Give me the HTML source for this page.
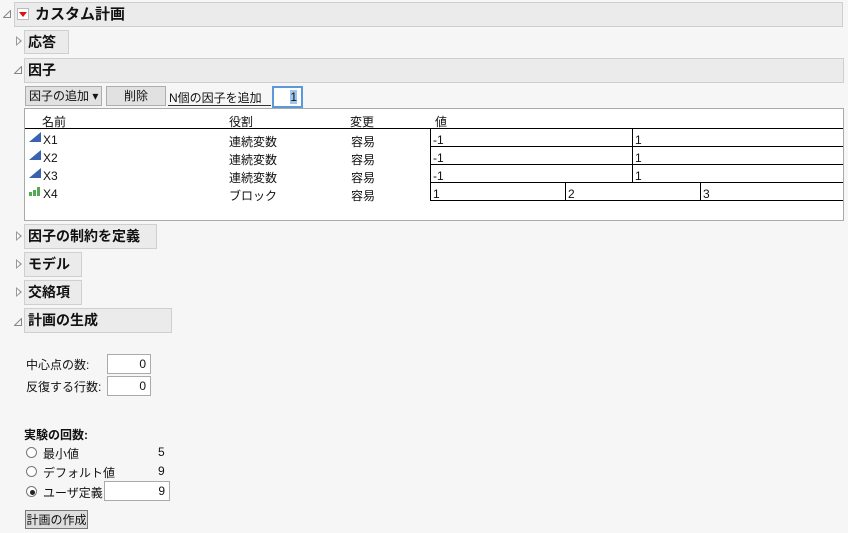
<!DOCTYPE html>
<html><head><meta charset="utf-8"><style>
body{margin:0;width:848px;height:533px;background:#f6f6f6;position:relative;overflow:hidden;font-family:"Liberation Sans","Noto Sans CJK JP",sans-serif;font-size:12px;color:#111}
.a{position:absolute;white-space:nowrap}
.hd{position:absolute;background:#ebebeb;border:1px solid #cfcfcf;box-sizing:border-box;font-weight:bold;font-size:14px;padding-left:3px;line-height:22px}
.tri{position:absolute;width:0;height:0;border-top:5px solid transparent;border-bottom:5px solid transparent;border-left:6px solid #999}
.tri:after{content:"";position:absolute;left:-5px;top:-3px;border-top:3px solid transparent;border-bottom:3px solid transparent;border-left:3.5px solid #fff}
.open{position:absolute;width:8px;height:8px}
.box{position:absolute;background:#fff;border:1px solid #aaa;box-sizing:border-box;text-align:right;padding-right:4px;line-height:18px}
.btn{position:absolute;background:#e1e1e1;border:1px solid #adadad;box-sizing:border-box;text-align:center;line-height:18px}
.hl{position:absolute;height:1px;background:#000}
.vl{position:absolute;width:1px;background:#000}
.rad{position:absolute;width:11px;height:11px;border:1px solid #777;border-radius:50%;background:#fff;box-sizing:border-box}
</style></head><body>
<svg class="open" style="left:3px;top:10px" viewBox="0 0 8 8"><path d="M7.5 0.5V7.5H0.5Z" fill="none" stroke="#888"/></svg>
<div class="hd" style="left:14px;top:2px;width:829px;height:25px;font-size:15px;padding-left:20px;line-height:24px">カスタム計画</div>
<div class="a" style="left:17px;top:8px;width:12px;height:12px;background:#fff;border:1px solid #bbb;box-sizing:border-box"></div>
<div class="a" style="left:19px;top:12px;border-left:4px solid transparent;border-right:4px solid transparent;border-top:5px solid #d11"></div>

<div class="tri" style="left:16px;top:36px"></div>
<div class="hd" style="left:24px;top:30px;width:45px;height:24px">応答</div>
<svg class="open" style="left:14px;top:66px" viewBox="0 0 8 8"><path d="M7.5 0.5V7.5H0.5Z" fill="none" stroke="#888"/></svg>
<div class="hd" style="left:24px;top:58px;width:820px;height:25px">因子</div>

<div class="btn" style="left:25px;top:86px;width:77px;height:20px;text-align:left;padding-left:3px">因子の追加 ▾</div>
<div class="btn" style="left:106px;top:86px;width:60px;height:20px">削除</div>
<div class="a" style="left:169px;top:89px">N個の因子を追加</div>
<div class="a" style="left:168px;top:105px;width:103px;height:1px;background:#333"></div>
<div class="box" style="left:272px;top:86px;width:31px;height:22px;border:2px solid #5a9ad8;line-height:18px"><span style="background:#9cc6ee">1</span></div>

<div class="a" style="left:24px;top:108px;width:820px;height:113px;background:#fff;border:1px solid #aaa;box-sizing:border-box"></div>
<div class="a" style="left:42px;top:113px">名前</div>
<div class="a" style="left:229px;top:113px">役割</div>
<div class="a" style="left:350px;top:113px">変更</div>
<div class="a" style="left:435px;top:113px">値</div>
<div class="hl" style="left:25px;top:128px;width:818px"></div>
<div class="hl" style="left:430px;top:146px;width:413px"></div>
<div class="hl" style="left:430px;top:164px;width:413px"></div>
<div class="hl" style="left:430px;top:182px;width:413px"></div>
<div class="hl" style="left:430px;top:200px;width:413px"></div>
<div class="vl" style="left:430px;top:128px;height:73px"></div>
<div class="vl" style="left:632px;top:128px;height:54px"></div>
<div class="vl" style="left:565px;top:182px;height:19px"></div>
<div class="vl" style="left:700px;top:182px;height:19px"></div>
<svg class="a" style="left:29px;top:132px" width="13" height="10"><path d="M0 10L12 0V10Z" fill="#3a62b0"/></svg>
<svg class="a" style="left:29px;top:150px" width="13" height="10"><path d="M0 10L12 0V10Z" fill="#3a62b0"/></svg>
<svg class="a" style="left:29px;top:168px" width="13" height="10"><path d="M0 10L12 0V10Z" fill="#3a62b0"/></svg>
<svg class="a" style="left:29px;top:186px" width="13" height="10"><rect x="0" y="6" width="3" height="4" fill="#5a5"/><rect x="4" y="4" width="3" height="6" fill="#5a5"/><rect x="8" y="1" width="3" height="9" fill="#5a5"/></svg>
<div class="a" style="left:43px;top:133px">X1</div><div class="a" style="left:229px;top:133px">連続変数</div><div class="a" style="left:351px;top:133px">容易</div><div class="a" style="left:433px;top:133px">-1</div><div class="a" style="left:635px;top:133px">1</div>
<div class="a" style="left:43px;top:151px">X2</div><div class="a" style="left:229px;top:151px">連続変数</div><div class="a" style="left:351px;top:151px">容易</div><div class="a" style="left:433px;top:151px">-1</div><div class="a" style="left:635px;top:151px">1</div>
<div class="a" style="left:43px;top:169px">X3</div><div class="a" style="left:229px;top:169px">連続変数</div><div class="a" style="left:351px;top:169px">容易</div><div class="a" style="left:433px;top:169px">-1</div><div class="a" style="left:635px;top:169px">1</div>
<div class="a" style="left:43px;top:187px">X4</div><div class="a" style="left:229px;top:187px">ブロック</div><div class="a" style="left:351px;top:187px">容易</div><div class="a" style="left:433px;top:187px">1</div><div class="a" style="left:568px;top:187px">2</div><div class="a" style="left:703px;top:187px">3</div>

<div class="tri" style="left:16px;top:231px"></div>
<div class="hd" style="left:24px;top:224px;width:133px;height:25px">因子の制約を定義</div>
<div class="tri" style="left:16px;top:259px"></div>
<div class="hd" style="left:24px;top:252px;width:58px;height:25px">モデル</div>
<div class="tri" style="left:16px;top:287px"></div>
<div class="hd" style="left:24px;top:280px;width:58px;height:25px">交絡項</div>
<svg class="open" style="left:14px;top:318px" viewBox="0 0 8 8"><path d="M7.5 0.5V7.5H0.5Z" fill="none" stroke="#888"/></svg>
<div class="hd" style="left:24px;top:308px;width:148px;height:25px">計画の生成</div>

<div class="a" style="left:26px;top:356px">中心点の数:</div>
<div class="box" style="left:107px;top:354px;width:44px;height:20px">0</div>
<div class="a" style="left:26px;top:378px">反復する行数:</div>
<div class="box" style="left:107px;top:376px;width:44px;height:20px">0</div>
<div class="a" style="left:24px;top:426px;font-weight:bold">実験の回数:</div>
<div class="rad" style="left:26px;top:447px"></div><div class="a" style="left:43px;top:445px">最小値</div><div class="a" style="left:158px;top:445px">5</div>
<div class="rad" style="left:26px;top:466px"></div><div class="a" style="left:43px;top:464px">デフォルト値</div><div class="a" style="left:158px;top:464px">9</div>
<div class="rad" style="left:26px;top:486px"></div><div class="a" style="left:30px;top:490px;width:5px;height:5px;border-radius:50%;background:#222"></div><div class="a" style="left:43px;top:484px">ユーザ定義</div>
<div class="box" style="left:104px;top:481px;width:66px;height:20px">9</div>
<div class="btn" style="left:25px;top:510px;width:63px;height:19px;background:#ddd;border-color:#777">計画の作成</div>
</body></html>
